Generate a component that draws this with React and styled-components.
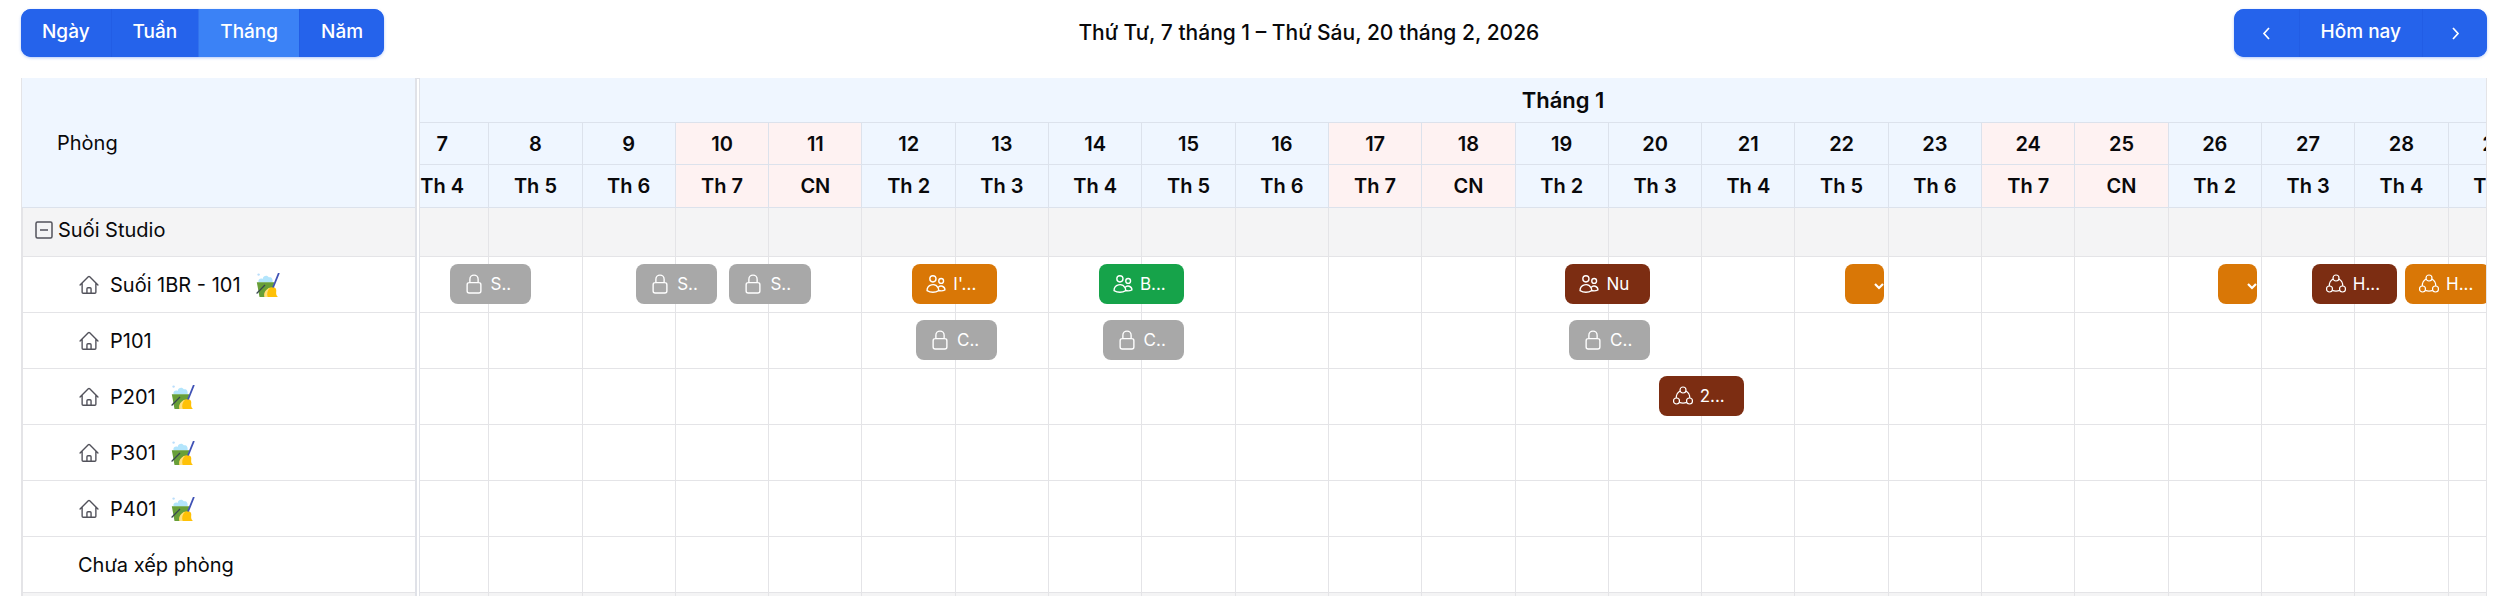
import React, { useState } from 'react';
import styled, { createGlobalStyle } from 'styled-components';
import { HiOutlineHome, HiOutlineLockClosed, HiOutlineUsers } from 'react-icons/hi2';

const VIEWS = ['Ngày', 'Tuần', 'Tháng', 'Năm'];
const WEEKDAYS = ['CN', 'Th 2', 'Th 3', 'Th 4', 'Th 5', 'Th 6', 'Th 7'];

const COLORS = {
    blocked: '#a8a8a8',
    pending: '#d97706',
    staying: '#16a34a',
    done: '#7c2d12',
};

// 4/1/2026 is a Sunday
const days = Array.from({ length: 23 }, (_, i) => {
    const date = i + 7;
    const weekday = (date - 4) % 7;
    return { date, label: WEEKDAYS[weekday], weekend: weekday === 0 || weekday === 6 };
});

// offset and length are in percent of one day
const block = (day, title) => ({ day, title, offset: 58, length: 88, icon: 'lock', status: 'blocked' });
const stay = (day, title, icon, status) => ({ day, title, offset: 54, length: 92, icon, status });
const short = (day) => ({ day, title: '', offset: 54, length: 42, icon: 'more', status: 'pending' });

const rooms = [
    {
        name: 'Suối 1BR - 101',
        cleaning: true,
        bookings: [
            block(7, 'S..'),
            block(9, 'S..'),
            block(10, 'S..'),
            stay(12, "I'...", 'users', 'pending'),
            stay(14, 'B...', 'users', 'staying'),
            stay(19, 'Nu', 'users', 'done'),
            short(22),
            short(26),
            stay(27, 'H...', 'group', 'done'),
            stay(28, 'H...', 'group', 'pending'),
        ],
    },
    { name: 'P101', bookings: [block(12, 'C..'), block(14, 'C..'), block(19, 'C..')] },
    { name: 'P201', cleaning: true, bookings: [stay(20, '2...', 'group', 'done')] },
    { name: 'P301', cleaning: true, bookings: [] },
    { name: 'P401', cleaning: true, bookings: [] },
];

const GroupIcon = () => (
    <svg width="22" height="22" viewBox="0 0 22 22" fill="none" stroke="currentColor" strokeWidth="1.2" aria-hidden="true">
        <circle cx="11" cy="5" r="3" />
        <circle cx="4.500" cy="16" r="3" />
        <circle cx="17.500" cy="16" r="3" />
        <path d="M8.200 6C5.500 7.400 4.200 10 4.300 13M13.800 6c2.700 1.400 4 4 3.900 7M7.300 17.400c2.400 1 5 1 7.400 0" />
    </svg>
);

const CleaningIcon = () => (
    <svg width="24" height="24" viewBox="0 0 24 24" aria-hidden="true">
        <path fill="#b3e5fc" d="M2.500 9.500c-.8-3 1.800-4.600 4.200-3.600C7 2.400 11.500 1.600 12.800 4.300c2.700-.6 4.400 1.500 3.700 5.200z" />
        <circle cx="2.600" cy="1.600" r="1.200" fill="#bbdefb" />
        <path fill="#689f38" d="M.8 9.200h17.400L15.500 24H3.500z" />
        <path fill="none" stroke="#37474f" strokeWidth="1.200" d="M.6 20.500 9 12" />
        <path fill="#ffc107" d="M16 14.200c3.600-.3 4.600 2 4.200 4.400-.3 2.400.2 4.200 1.800 5.400H8.500c-1.300-4.800 2.500-9.400 7.500-9.800z" />
        <path fill="#ffe082" d="M14 14.700c-4 1.300-6.500 5-5.500 9.300h3.200c-1.200-3.600-.2-7 2.300-9.300z" />
        <path fill="none" stroke="#3f51b5" strokeWidth="1.800" d="M22.900 0 17 14.500" />
    </svg>
);

const Arrow = ({ d }) => (
    <svg width="20" height="20" viewBox="0 0 20 20" fill="none" stroke="currentColor" strokeWidth="1.700" aria-hidden="true">
        <path d={d} />
    </svg>
);

const MoreIcon = () => (
    <svg width="10" height="10" viewBox="0 0 10 10" fill="none" stroke="currentColor" strokeWidth="2.200" aria-hidden="true">
        <path d="M1 3l4 4 4-4" />
    </svg>
);

const ICONS = {
    lock: <HiOutlineLockClosed size={22} />,
    users: <HiOutlineUsers size={22} />,
    group: <GroupIcon />,
    more: <MoreIcon />,
};

const App = () => {
    const [view, setView] = useState('Tháng');

    return (
        <Page>
            <GlobalStyle />
            <Toolbar>
                <ButtonGroup>
                    {VIEWS.map((name) => (
                        <ToolButton key={name} $active={name === view} onClick={() => setView(name)}>
                            {name}
                        </ToolButton>
                    ))}
                </ButtonGroup>
                <Title>Thứ Tư, 7 tháng 1 – Thứ Sáu, 20 tháng 2, 2026</Title>
                <ButtonGroup>
                    <ArrowButton aria-label="Trước">
                        <Arrow d="M13 6l-5 5.500 5 5.500" />
                    </ArrowButton>
                    <ToolButton>Hôm nay</ToolButton>
                    <ArrowButton aria-label="Sau">
                        <Arrow d="M8 6l5 5.500-5 5.500" />
                    </ArrowButton>
                </ButtonGroup>
            </Toolbar>
            <Calendar>
                <RoomTable>
                    <thead>
                        <tr>
                            <RoomHead>Phòng</RoomHead>
                        </tr>
                    </thead>
                    <tbody>
                        <GroupRow>
                            <RoomCell>
                                <GroupLabel>
                                    <Toggle aria-label="Thu gọn">
                                        <svg width="18" height="18" viewBox="0 0 18 18" fill="none" stroke="#52525b" strokeWidth="1.500">
                                            <rect x="1" y="1" width="16" height="16" rx="1.500" />
                                            <path d="M5 9h8" />
                                        </svg>
                                    </Toggle>
                                    Suối Studio
                                </GroupLabel>
                            </RoomCell>
                        </GroupRow>
                        {rooms.map((room) => (
                            <Row key={room.name}>
                                <RoomCell>
                                    <RoomLabel>
                                        <HiOutlineHome size={22} color="#52525b" />
                                        <RoomName>{room.name}</RoomName>
                                        {room.cleaning && <CleaningIcon />}
                                    </RoomLabel>
                                </RoomCell>
                            </Row>
                        ))}
                        <Row>
                            <RoomCell>
                                <RoomLabel>Chưa xếp phòng</RoomLabel>
                            </RoomCell>
                        </Row>
                        <GroupRow>
                            <RoomCell />
                        </GroupRow>
                    </tbody>
                </RoomTable>
                <Divider />
                <Timeline>
                    <DayTable>
                        <thead>
                            <tr>
                                <MonthHead colSpan={days.length}>
                                    <MonthName>Tháng 1</MonthName>
                                </MonthHead>
                            </tr>
                            <tr>
                                {days.map((day) => (
                                    <DayHead key={day.date} $weekend={day.weekend}>{day.date}</DayHead>
                                ))}
                            </tr>
                            <tr>
                                {days.map((day) => (
                                    <WeekdayHead key={day.date} $weekend={day.weekend}>{day.label}</WeekdayHead>
                                ))}
                            </tr>
                        </thead>
                        <tbody>
                            <GroupRow>
                                {days.map((day) => <DayCell key={day.date} />)}
                            </GroupRow>
                            {[...rooms, { name: 'none', bookings: [] }].map((room) => (
                                <Row key={room.name}>
                                    {days.map((day) => (
                                        <DayCell key={day.date}>
                                            {room.bookings.filter((b) => b.day === day.date).map((b) => (
                                                <Booking
                                                    key={b.day}
                                                    $color={COLORS[b.status]}
                                                    $short={b.icon === 'more'}
                                                    style={{ left: `${b.offset}%`, width: `${b.length}%` }}
                                                >
                                                    {ICONS[b.icon]}
                                                    {b.title}
                                                </Booking>
                                            ))}
                                        </DayCell>
                                    ))}
                                </Row>
                            ))}
                            <GroupRow>
                                {days.map((day) => <DayCell key={day.date} />)}
                            </GroupRow>
                        </tbody>
                    </DayTable>
                </Timeline>
            </Calendar>
        </Page>
    );
};

const GlobalStyle = createGlobalStyle`
    * {
        box-sizing: border-box;
    }

    body {
        margin: 0;
        background: #fff;
        color: #09090b;
        font-family: Inter, "Liberation Sans", sans-serif;
        font-size: 20px;
        line-height: 28px;
    }
`;

const Page = styled.div`
    display: flex;
    flex-direction: column;
    gap: 21px;
    height: 100vh;
    padding: 9px 7px 0 21px;
`;

const Toolbar = styled.header`
    display: flex;
    align-items: center;
    justify-content: space-between;
`;

const ButtonGroup = styled.div`
    display: flex;
    overflow: hidden;
    border-radius: 10px;
    background: #2563eb;
    box-shadow: 0 1px 3px rgba(37, 99, 235, 0.35);

    button + button {
        border-left: 1px solid rgba(29, 78, 216, 0.3);
    }
`;

const ToolButton = styled.button`
    display: flex;
    align-items: center;
    justify-content: center;
    height: 48px;
    padding: 0 21px 3px;
    border: 0;
    background: ${({ $active }) => ($active ? '#3b82f6' : '#2563eb')};
    color: #fff;
    font: 500 19px/28px Inter, "Liberation Sans", sans-serif;
    cursor: pointer;
`;

const ArrowButton = styled(ToolButton)`
    width: 65px;
`;

const Title = styled.h2`
    margin: 0;
    font-size: 21px;
    font-weight: 500;
`;

const Calendar = styled.main`
    display: flex;
    align-items: flex-start;
    flex: 1;
    min-height: 0;
    overflow: hidden;
    border-right: 1px solid #e4e4e7;
`;

const Table = styled.table`
    border-collapse: separate;
    border-spacing: 0;
    table-layout: fixed;

    th,
    td {
        padding: 0;
        border-bottom: 1px solid #e4e4e7;
    }

    th {
        border-color: #dce2ec;
    }
`;

const RoomTable = styled(Table)`
    width: 394px;
    flex: none;
    border-left: 1px solid #e4e4e7;
`;

const RoomHead = styled.th`
    && {
        height: 130px;
        padding: 0 35px;
        background: #eff6ff;
        font-weight: 400;
        text-align: left;
    }
`;

const Row = styled.tr`
    height: 56px;
`;

const GroupRow = styled.tr`
    height: 49px;
    background: #f4f4f5;
`;

const RoomCell = styled.td`
    border-left: 1px solid #e4e4e7;
`;

const GroupLabel = styled.div`
    display: flex;
    align-items: center;
    gap: 5px;
    padding: 0 12px 4px;
`;

const Toggle = styled.button`
    display: flex;
    padding: 0;
    border: 0;
    background: none;
`;

const RoomLabel = styled.div`
    display: flex;
    align-items: center;
    gap: 10px;
    padding: 0 55px;
    white-space: nowrap;
`;

const RoomName = styled.span`
    padding-right: 5px;
`;

const Divider = styled.div`
    width: 5px;
    flex: none;
    align-self: stretch;
    border: solid #e0e2e8;
    border-width: 1px 1px 0 2px;
`;

const Timeline = styled.div`
    flex: 1;
    min-width: 0;
    overflow: hidden;
`;

/* scrolled a little past the start of the first day */
const DayTable = styled(Table)`
    width: calc(100% + 80px);
    margin-left: -24px;
`;

const HeadCell = styled.th`
    background: ${({ $weekend }) => ($weekend ? '#fef2f2' : '#eff6ff')};
    font-weight: 600;
    text-align: center;
`;

const MonthHead = styled(HeadCell)`
    height: 45px;
    font-size: 22px;
`;

const MonthName = styled.span`
    padding-left: 188px;
`;

const DayHead = styled(HeadCell)`
    height: 42px;
    border-right: 1px solid #dce2ec;
`;

const WeekdayHead = styled(DayHead)`
    height: 43px;
`;

const DayCell = styled.td`
    position: relative;
    border-right: 1px solid #e4e4e7;
`;

const Booking = styled.div`
    position: absolute;
    top: 7px;
    z-index: 1;
    display: flex;
    align-items: center;
    justify-content: ${({ $short }) => ($short ? 'flex-end' : 'flex-start')};
    gap: 6px;
    height: 40px;
    padding: ${({ $short }) => ($short ? '4px 0 0' : '0 13px')};
    border-radius: 8px;
    background: ${({ $color }) => $color};
    color: #fff;
    font-size: 17px;
    line-height: 24px;
    white-space: nowrap;
    overflow: hidden;

    svg {
        flex: none;
    }
`;

export default App;
